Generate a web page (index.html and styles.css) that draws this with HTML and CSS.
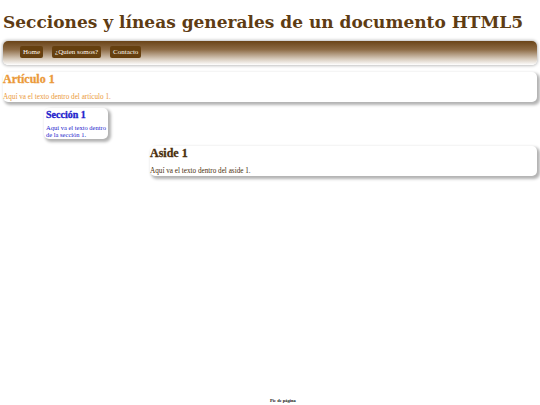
FILE: index.html
```html
<!DOCTYPE html>
<html lang="es">
<head>
<meta charset="utf-8">
<title>Secciones HTML5</title>
<link rel="stylesheet" href="styles.css">
</head>
<body>
<div class="page">
  <header class="header">
    <h1 class="title">Secciones y líneas generales de un documento HTML5</h1>
  </header>
  <nav class="nav">
    <a class="nav-link" href="#">Home</a>
    <a class="nav-link" href="#">¿Quien somos?</a>
    <a class="nav-link" href="#">Contacto</a>
  </nav>
  <article class="box article">
    <h2 class="box-title">Artículo 1</h2>
    <p class="box-text">Aquí va el texto dentro del artículo 1.</p>
  </article>
  <section class="box section">
    <h3 class="box-title small">Sección 1</h3>
    <p class="box-text">Aquí va el texto dentro de la sección 1.</p>
  </section>
  <aside class="box aside">
    <h2 class="box-title">Aside 1</h2>
    <p class="box-text">Aquí va el texto dentro del aside 1.</p>
  </aside>
  <footer class="footer">Pie de página</footer>
</div>
</body>
</html>
```

FILE: styles.css
```css
html, body {
  margin: 0;
  padding: 0;
  background: #ffffff;
}
body {
  font-family: "Liberation Serif", "DejaVu Serif", serif;
}
.page {
  display: flex;
  flex-direction: column;
  min-height: 405px;
  padding: 0 3px;
  box-sizing: border-box;
}
.title {
  margin: 11px 0 0;
  font-family: "DejaVu Serif", serif;
  font-size: 17px;
  line-height: 22px;
  font-weight: bold;
  color: #5e3c14;
}
.nav {
  margin-top: 8px;
  height: 24px;
  border-radius: 5px;
  background: linear-gradient(to bottom, #6a4418 0%, #8c6a44 35%, #d8ccbd 75%, #ffffff 100%);
  box-shadow: 0 0 3px 1px rgba(0,0,0,0.25);
  display: flex;
  align-items: center;
  gap: 9px;
  padding: 0 0 0 17px;
}
.nav-link {
  background: #66400f;
  color: #fff8ee;
  text-decoration: none;
  font-size: 7px;
  line-height: 12px;
  padding: 0 3px;
  border-radius: 2px;
  margin-top: -2px;
}
.box {
  background: #ffffff;
  border-radius: 5px;
  box-shadow: 2px 2px 3px 1px rgba(0,0,0,0.3);
}
.box-title {
  margin: 0;
  font-weight: bold;
  -webkit-text-stroke: 0.3px currentColor;
}
.box-text {
  margin: 0;
  font-size: 7.2px;
  line-height: 7px;
}
.article {
  margin-top: 7px;
  height: 30px;
  color: #eb9a3a;
}
.article .box-title {
  font-size: 12px;
  line-height: 15px;
  margin-bottom: 7px;
}
.section {
  margin: 6px 0 0 41px;
  width: 64px;
  height: 31px;
  color: #2222cc;
  box-sizing: border-box;
  padding: 1px 2px;
}
.section .box-title {
  font-size: 10px;
  line-height: 11px;
  margin-bottom: 4px;
}
.section .box-text {
  font-size: 6.5px;
}
.aside {
  margin: 7px 0 0 147px;
  height: 30px;
  color: #4a2e0c;
}
.aside .box-title {
  font-size: 12px;
  line-height: 15px;
  margin-bottom: 7px;
}
.footer {
  margin-top: auto;
  text-align: center;
  font-size: 4.5px;
  line-height: 6px;
  font-weight: bold;
  padding: 0 0 1px 26px;
  color: #111111;
}
```
